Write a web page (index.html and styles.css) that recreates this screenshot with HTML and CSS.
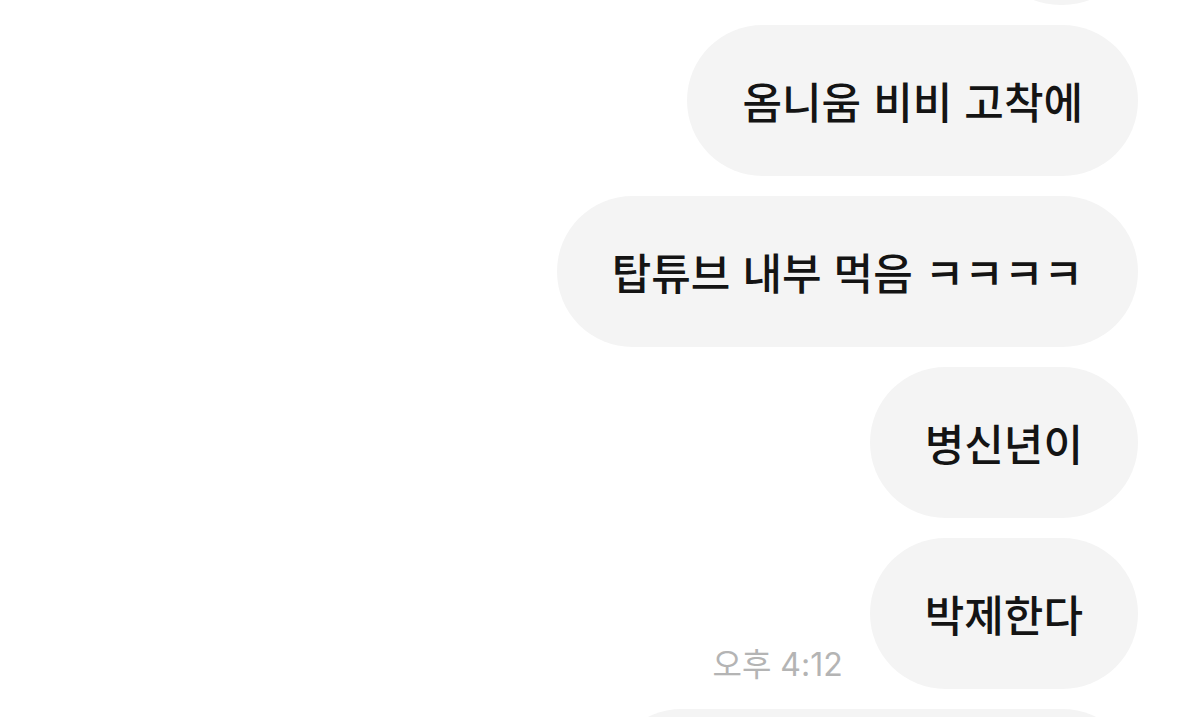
FILE: index.html
```html
<!DOCTYPE html>
<html lang="ko">
  <head>
    <meta charset="UTF-8" />
    <meta name="viewport" content="width=device-width, initial-scale=1.0" />
    <title>채팅</title>
    <link rel="stylesheet" href="styles.css">
  </head>

  <body>
    <main class="chat">
      <div class="rad">
        <p class="boble boble-top"></p>
      </div>
      <div class="rad">
        <p class="boble">옴니움 비비 고착에</p>
      </div>
      <div class="rad">
        <p class="boble">탑튜브 내부 먹음 ㅋㅋㅋㅋ</p>
      </div>
      <div class="rad">
        <p class="boble">병신년이</p>
      </div>
      <div class="rad">
        <span class="tid">오후 4:12</span>
        <p class="boble">박제한다</p>
      </div>
      <div class="rad">
        <p class="boble boble-bund"></p>
      </div>
    </main>
  </body>
</html>
```

FILE: styles.css
```css
body {
  margin: 0;
  background-color: #ffffff;
  font-family: "Noto Sans CJK KR", "Noto Sans", sans-serif;
  overflow: hidden;
}

.chat {
  display: flex;
  flex-direction: column;
  align-items: flex-end;
  gap: 20px;
  padding-right: 62px;
  margin-top: -146px;
}

.rad {
  display: flex;
  align-items: flex-end;
  gap: 27px;
}

.boble {
  margin: 0;
  height: 151px;
  line-height: 151px;
  padding: 0 55px;
  border-radius: 76px;
  background-color: #f4f4f4;
  color: #141414;
  font-size: 43px;
  font-weight: 500;
  white-space: nowrap;
}

.boble-top {
  width: 43px;
}

.boble-bund {
  width: 422px;
}

.tid {
  color: #b4b4b4;
  font-family: "Inter", "Noto Sans CJK KR", sans-serif;
  font-size: 32px;
  line-height: 1;
  margin-bottom: 8px;
}
```
